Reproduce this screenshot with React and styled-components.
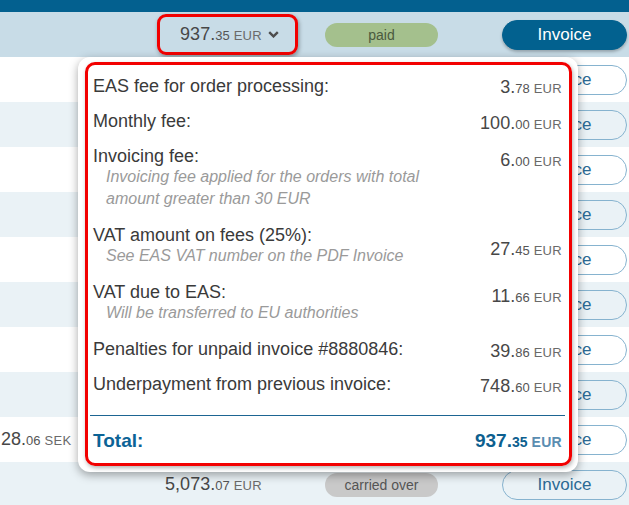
import React from 'react'
import styled, { createGlobalStyle } from 'styled-components'

const GlobalStyle = createGlobalStyle`
  html, body {
    margin: 0;
    padding: 0;
    background: #fff;
  }
  body {
    font-family: 'Liberation Sans', Arial, sans-serif;
    overflow: hidden;
  }
`

const Page = styled.div`
  position: relative;
  width: 629px;
  height: 505px;
  overflow: hidden;
`

const TopBar = styled.div`
  height: 12px;
  background: #03608f;
`

const Row = styled.div`
  display: flex;
  align-items: center;
  height: 45px;
  background: ${p => (p.$head ? '#c8dce7' : p.$alt ? '#eaf2f6' : '#fff')};
`

const Lead = styled.div`
  width: 157px;
  padding-left: 1px;
  box-sizing: border-box;
  white-space: nowrap;
`

const AmountCell = styled.div`
  width: 141px;
  height: 41px;
  box-sizing: border-box;
  display: flex;
  align-items: center;
  justify-content: flex-end;
  padding-right: 14px;
  border: 3px solid ${p => (p.$marked ? '#f20000' : 'transparent')};
  border-radius: 9px;
  box-shadow: ${p => (p.$marked ? '1px 2px 4px rgba(0,0,0,.35)' : 'none')};
`

const ChevronSlot = styled.span`
  width: 19px;
  display: flex;
  align-items: center;
  padding-left: 6px;
  box-sizing: border-box;
`

const StatusCell = styled.div`
  margin-left: 27px;
  width: 113px;
`

const Pill = styled.div`
  height: 24px;
  border-radius: 12px;
  display: flex;
  align-items: center;
  justify-content: center;
  font-size: 14px;
  background: ${p => (p.$tone === 'paid' ? '#a4c08d' : '#c9c9c9')};
  color: ${p => (p.$tone === 'paid' ? '#4a5a3e' : '#555')};
`

const ActionCell = styled.div`
  margin-left: 64px;
  width: 125px;
`

const InvoiceButton = styled.button`
  width: 125px;
  height: 30px;
  border-radius: 15px;
  font-family: inherit;
  font-size: 17px;
  padding: 0;
  cursor: pointer;
  border: 1px solid ${p => (p.$filled ? '#02618f' : '#86b3cf')};
  background: ${p => (p.$filled ? '#02618f' : 'transparent')};
  color: ${p => (p.$filled ? '#fff' : '#2c6a94')};
  box-shadow: ${p => (p.$filled ? '0 2px 3px rgba(0,0,0,.25)' : 'none')};
`

const Big = styled.span`
  font-size: ${p => (p.$total ? 19 : 18)}px;
  font-weight: ${p => (p.$total ? 700 : 400)};
  color: ${p => (p.$total ? '#0d5f8f' : '#474747')};
`

const Cents = styled.span`
  font-size: ${p => (p.$total ? 14 : 13)}px;
  font-weight: ${p => (p.$total ? 700 : 400)};
  color: ${p => (p.$total ? '#0d5f8f' : '#555')};
`

const Cur = styled.span`
  margin-left: 4px;
  font-size: ${p => (p.$total ? 14 : 13)}px;
  font-weight: ${p => (p.$total ? 700 : 400)};
  letter-spacing: 0.3px;
  color: ${p => (p.$total ? '#5a8db1' : '#6a6a6a')};
`

const Money = ({ value, cur, total }) => {
  const [whole, cents] = value.split('.')
  return (
    <span>
      <Big $total={total}>{whole}.</Big>
      <Cents $total={total}>{cents}</Cents>
      <Cur $total={total}>{cur}</Cur>
    </span>
  )
}

const Popover = styled.div`
  position: absolute;
  left: 78px;
  top: 57px;
  width: 500px;
  height: 415px;
  box-sizing: border-box;
  padding: 5px 6px 6px 7px;
  background: #fff;
  border-radius: 12px;
  box-shadow: 0 3px 10px rgba(0, 0, 0, 0.35);
`

const Marked = styled.div`
  height: 100%;
  box-sizing: border-box;
  border: 3px solid #f20000;
  border-radius: 10px;
  padding: 11px 7px 11px 5px;
  box-shadow: 1px 2px 4px rgba(0, 0, 0, 0.3);
  display: flex;
  flex-direction: column;
`

const Items = styled.div`
  display: flex;
  flex-direction: column;
  gap: 15px;
`

const Item = styled.div`
  display: flex;
  justify-content: space-between;
  align-items: flex-start;
`

const Label = styled.div`
  height: 20px;
  font-size: 18px;
  line-height: 20px;
  color: #3a3a3a;
  white-space: nowrap;
`

const Note = styled.div`
  height: 22px;
  padding-left: 13px;
  font-size: 16px;
  font-style: italic;
  line-height: 22px;
  color: #9a9a9a;
  white-space: nowrap;
`

const Amount = styled.div`
  height: 20px;
  line-height: 20px;
  margin-top: ${p => p.$drop || 0}px;
  margin-bottom: -${p => p.$drop || 0}px;
  white-space: nowrap;
`

const Divider = styled.hr`
  margin: 21px -3px 13px;
  border: none;
  border-top: 1px solid #1d6592;
`

const TotalRow = styled.div`
  height: 24px;
  display: flex;
  justify-content: space-between;
  align-items: center;
`

const TotalLabel = styled.div`
  font-size: 19px;
  font-weight: 700;
  color: #0b6396;
`

const fees = [
  { label: 'EAS fee for order processing:', value: '3.78', drop: 1 },
  { label: 'Monthly fee:', value: '100.00', drop: 2 },
  {
    label: 'Invoicing fee:',
    value: '6.00',
    drop: 4,
    notes: ['Invoicing fee applied for the orders with total', 'amount greater than 30 EUR'],
  },
  {
    label: 'VAT amount on fees (25%):',
    value: '27.45',
    drop: 14,
    notes: ['See EAS VAT number on the PDF Invoice'],
  },
  {
    label: 'VAT due to EAS:',
    value: '11.66',
    drop: 4,
    notes: ['Will be transferred to EU authorities'],
  },
  { label: 'Penalties for unpaid invoice #8880846:', value: '39.86', drop: 2 },
  { label: 'Underpayment from previous invoice:', value: '748.60', drop: 2 },
]

const Chevron = () => (
  <svg width="11" height="7" viewBox="0 0 11 7">
    <polyline points="1.2,1.2 5.5,5.4 9.8,1.2" fill="none" stroke="#4d4d4d" strokeWidth="2.4" />
  </svg>
)

const FeeBreakdown = () => (
  <Popover>
    <Marked>
      <Items>
        {fees.map(f => (
          <Item key={f.label}>
            <div>
              <Label>{f.label}</Label>
              {f.notes && f.notes.map(n => <Note key={n}>{n}</Note>)}
            </div>
            <Amount $drop={f.drop}>
              <Money value={f.value} cur="EUR" />
            </Amount>
          </Item>
        ))}
      </Items>
      <Divider />
      <TotalRow>
        <TotalLabel>Total:</TotalLabel>
        <Money value="937.35" cur="EUR" total />
      </TotalRow>
    </Marked>
  </Popover>
)

const rows = [
  { alt: false },
  { alt: true },
  { alt: false },
  { alt: true },
  { alt: false },
  { alt: true },
  { alt: false },
  { alt: true },
  { alt: false, lead: { value: '28.06', cur: 'SEK' } },
  { alt: true, amount: '5,073.07', status: 'carried over' },
]

export default function App() {
  return (
    <Page>
      <GlobalStyle />
      <TopBar />
      <Row $head>
        <Lead />
        <AmountCell $marked>
          <Money value="937.35" cur="EUR" />
          <ChevronSlot>
            <Chevron />
          </ChevronSlot>
        </AmountCell>
        <StatusCell>
          <Pill $tone="paid">paid</Pill>
        </StatusCell>
        <ActionCell>
          <InvoiceButton $filled>Invoice</InvoiceButton>
        </ActionCell>
      </Row>
      {rows.map((r, i) => (
        <Row key={i} $alt={r.alt}>
          <Lead>{r.lead && <Money value={r.lead.value} cur={r.lead.cur} />}</Lead>
          <AmountCell>
            {r.amount && <Money value={r.amount} cur="EUR" />}
            <ChevronSlot />
          </AmountCell>
          <StatusCell>{r.status && <Pill>{r.status}</Pill>}</StatusCell>
          <ActionCell>
            <InvoiceButton>Invoice</InvoiceButton>
          </ActionCell>
        </Row>
      ))}
      <FeeBreakdown />
    </Page>
  )
}
